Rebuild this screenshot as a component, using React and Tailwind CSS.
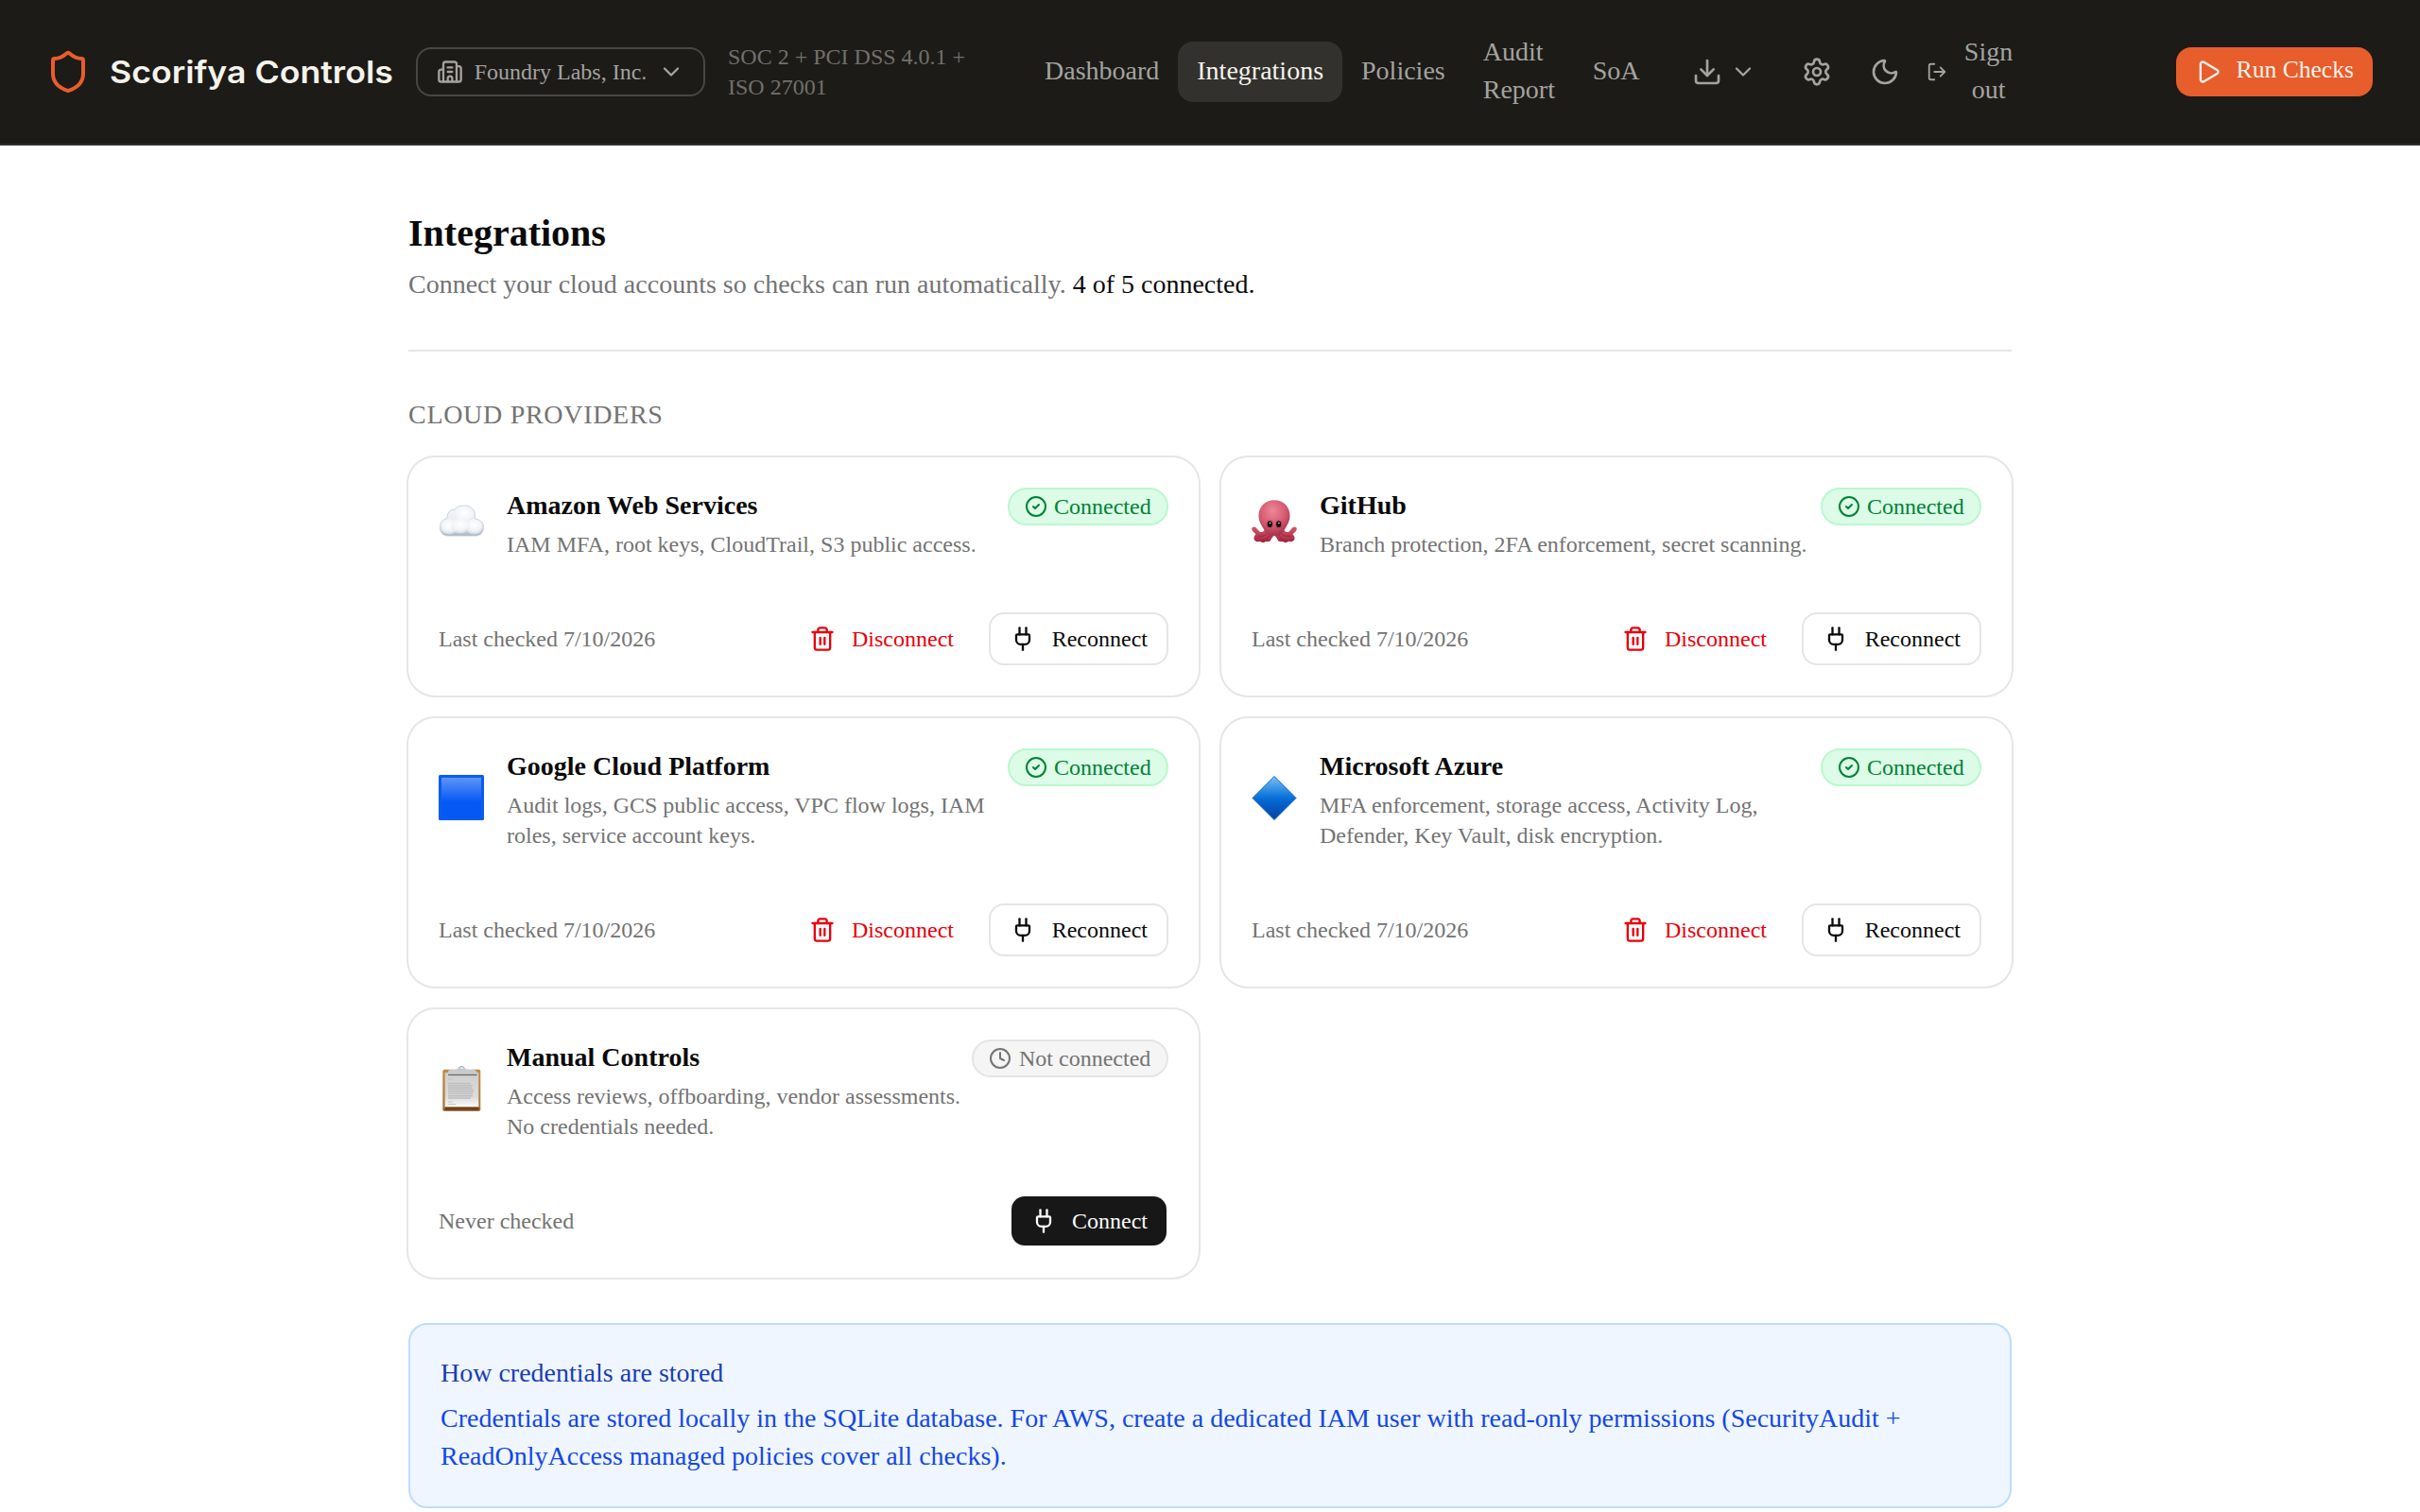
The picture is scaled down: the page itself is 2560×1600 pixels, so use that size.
import React from "react";
import {
  Building2,
  ChevronDown,
  CircleCheck,
  Clock,
  Download,
  LogOut,
  Moon,
  Play,
  Plug,
  Settings,
  Shield,
  Trash2,
} from "lucide-react";

const CloudIcon = () => (
  <svg className="size-12" viewBox="0 0 48 48">
    <defs>
      <linearGradient id="cloud" x1="0" y1="0" x2="0" y2="1">
        <stop offset="0" stopColor="#f4f6f8" />
        <stop offset="0.6" stopColor="#e8ecf1" />
        <stop offset="1" stopColor="#aab7c5" />
      </linearGradient>
      <radialGradient id="puff" cx="0.5" cy="0.4" r="0.6">
        <stop offset="0" stopColor="#ffffff" />
        <stop offset="0.7" stopColor="#f3f5f8" stopOpacity="0.9" />
        <stop offset="1" stopColor="#dde3ea" stopOpacity="0.6" />
      </radialGradient>
    </defs>
    <path
      d="M10 39C4.500 39 1.500 35 1.500 30c0-5 3-8.500 7.500-9.500 0-6 3-9.500 7.500-9 2-3 6-4.500 10.500-4.500 6.500 0 11 4 11.500 9.500 0 1.500 0 3-.5 4.500C44 21.500 47.500 25 47.500 30c0 5-3 9-8.500 9z"
      fill="url(#cloud)"
      stroke="#bcc7d3"
      strokeWidth="0.8"
    />
    <ellipse cx="27" cy="16.500" rx="10.500" ry="9" fill="url(#puff)" />
    <ellipse cx="11" cy="29.500" rx="9" ry="8" fill="url(#puff)" />
    <ellipse cx="37.500" cy="29.500" rx="9" ry="8" fill="url(#puff)" />
    <ellipse cx="23" cy="28.500" rx="9.500" ry="8" fill="url(#puff)" />
  </svg>
);

const OctopusIcon = () => (
  <svg className="size-12" viewBox="0 0 48 48">
    <defs>
      <radialGradient id="octoHead" cx="0.45" cy="0.3" r="0.75">
        <stop offset="0" stopColor="#ee8799" />
        <stop offset="0.55" stopColor="#d55a70" />
        <stop offset="1" stopColor="#9c2c44" />
      </radialGradient>
      <linearGradient id="octoArm" x1="0" y1="0" x2="0" y2="1">
        <stop offset="0" stopColor="#d6576c" />
        <stop offset="1" stopColor="#a3263d" />
      </linearGradient>
    </defs>
    <g fill="url(#octoArm)">
      <path d="M15 31c-1 3-4 5-6.500 3.500C6.500 33 5.500 30 3 29.500c-2-.3-3.500 1.500-2.500 3.500 1 2 2.500 2.500 4 4.500-2 1.500-2.500 4-1.500 6 1.500 2.500 5 1.500 6 1.500 2 1.500 4.500 1.500 6 0 3 1 5.500-.5 6-3L24 38z" />
      <path d="M33 31c1 3 4 5 6.500 3.500 2-1.500 3-4.500 5.500-5 2-.3 3.500 1.500 2.500 3.500-1 2-2.500 2.500-4 4.500 2 1.500 2.500 4 1.500 6-1.500 2.500-5 1.500-6 1.500-2 1.500-4.500 1.500-6 0-3 1-5.500-.5-6-3L24 38z" />
    </g>
    <path
      d="M7 39c4 1 8 0 10-3M10 44c4 0 7-2 9-6M41 39c-4 1-8 0-10-3M38 44c-4 0-7-2-9-6"
      fill="none"
      stroke="#8a1c33"
      strokeWidth="0.6"
    />
    <path
      d="M24 1.300C14 1.300 7.500 8.500 7.500 17.800c0 5.700 2.500 9.200 4.500 12.700 2 3.500 3.500 8.500 12 8.500s10-5 12-8.500c2-3.500 4.500-7 4.500-12.700 0-9.300-6.500-16.500-16.500-16.500z"
      fill="url(#octoHead)"
    />
    <ellipse cx="19.300" cy="26.700" rx="3.600" ry="4.300" fill="#b8415a" />
    <ellipse cx="28.700" cy="26.700" rx="3.600" ry="4.300" fill="#b8415a" />
    <ellipse cx="19.300" cy="26.700" rx="2.500" ry="3.300" fill="#12090b" />
    <ellipse cx="28.700" cy="26.700" rx="2.500" ry="3.300" fill="#12090b" />
    <circle cx="19.500" cy="25.500" r="0.8" fill="#fff" />
    <circle cx="28.900" cy="25.500" r="0.8" fill="#fff" />
  </svg>
);

const SquareIcon = () => (
  <svg className="size-12" viewBox="0 0 48 48">
    <defs>
      <linearGradient id="square" x1="0" y1="0" x2="0" y2="1">
        <stop offset="0" stopColor="#5c94f8" />
        <stop offset="0.6" stopColor="#0558f4" />
        <stop offset="1" stopColor="#0558f4" />
      </linearGradient>
    </defs>
    <rect width="48" height="48" rx="1.500" fill="#0a5cf0" />
    <rect x="3" y="3" width="42" height="43" fill="url(#square)" />
  </svg>
);

const DiamondIcon = () => (
  <svg className="size-12" viewBox="0 0 48 48">
    <defs>
      <linearGradient id="diamond" x1="0" y1="0" x2="0" y2="1">
        <stop offset="0" stopColor="#7cc0f4" />
        <stop offset="0.45" stopColor="#0f78dc" />
        <stop offset="0.55" stopColor="#0568d4" />
        <stop offset="1" stopColor="#0540a0" />
      </linearGradient>
    </defs>
    <path d="M24 1.500 47 24.500 24 47.500 1 24.500z" fill="url(#diamond)" stroke="#0a62b8" strokeWidth="1" strokeLinejoin="round" />
  </svg>
);

const ClipboardIcon = () => (
  <svg className="size-12" viewBox="0 0 48 48">
    <defs>
      <linearGradient id="board" x1="0" y1="0" x2="0" y2="1">
        <stop offset="0" stopColor="#c48c45" />
        <stop offset="0.9" stopColor="#b07a3a" />
        <stop offset="1" stopColor="#8a5a26" />
      </linearGradient>
      <linearGradient id="paper" x1="0" y1="0" x2="0" y2="1">
        <stop offset="0" stopColor="#cfcfcf" />
        <stop offset="0.7" stopColor="#dcdcdc" />
        <stop offset="1" stopColor="#fafafa" />
      </linearGradient>
    </defs>
    <rect x="4.300" y="3.700" width="40" height="44" rx="1.800" fill="url(#board)" />
    <rect x="6.700" y="7" width="35.600" height="36.500" fill="url(#paper)" />
    <path d="M10 14h5M10 38h5M10 40.500h8" stroke="#bdbdbd" strokeWidth="0.8" />
    <path
      d="M10 18.500h24M10 20.700h26M10 22.900h25M10 25.100h27M10 27.300h27M10 29.500h26M10 31.700h26M10 33.900h24"
      stroke="#bebebe"
      strokeWidth="1.500"
    />
    <rect x="6.700" y="43.500" width="35.600" height="3.300" fill="#704317" />
    <rect x="10" y="8.500" width="30.500" height="1.600" fill="#6d665c" />
    <path d="M10 8.700V6q0-1.700 2.500-1.900h5q2-.1 3-1.600h7.600q1 1.500 3 1.600h5q2.500.2 4.500 1.900v2.700z" fill="#c5cbcf" />
    <path d="M21.300 3.500a3 3 0 0 1 6 0" fill="none" stroke="#a9b8c4" strokeWidth="1.300" />
  </svg>
);

const providers = [
  {
    name: "Amazon Web Services",
    icon: CloudIcon,
    description: "IAM MFA, root keys, CloudTrail, S3 public access.",
    connected: true,
    lastChecked: "Last checked 7/10/2026",
  },
  {
    name: "GitHub",
    icon: OctopusIcon,
    description: "Branch protection, 2FA enforcement, secret scanning.",
    connected: true,
    lastChecked: "Last checked 7/10/2026",
  },
  {
    name: "Google Cloud Platform",
    icon: SquareIcon,
    description: "Audit logs, GCS public access, VPC flow logs, IAM roles, service account keys.",
    connected: true,
    lastChecked: "Last checked 7/10/2026",
  },
  {
    name: "Microsoft Azure",
    icon: DiamondIcon,
    description: "MFA enforcement, storage access, Activity Log, Defender, Key Vault, disk encryption.",
    connected: true,
    lastChecked: "Last checked 7/10/2026",
  },
  {
    name: "Manual Controls",
    icon: ClipboardIcon,
    description: "Access reviews, offboarding, vendor assessments. No credentials needed.",
    connected: false,
    lastChecked: "Never checked",
  },
];

const navItems = ["Dashboard", "Integrations", "Policies", "Audit Report", "SoA"];

const Header = () => (
  <header className="flex h-[154px] items-center border-b-2 border-[#32312d] bg-[#1c1b17] px-12 text-[28px] leading-10 text-[#a4a3a0]">
    <Shield className="size-12 shrink-0 text-[#e85d2c]" />
    <div className="ml-5 w-[300px] shrink-0 origin-left scale-x-[1.114] whitespace-nowrap pt-px font-['Inter'] text-[32px] font-semibold text-[#f5f3ec]">
      Scorifya Controls
    </div>
    <button className="ml-6 flex h-[52px] w-[306px] shrink-0 items-center justify-between rounded-2xl border-2 border-[#484744] px-5 text-2xl">
      <Building2 className="size-7 shrink-0" />
      <span className="whitespace-nowrap">Foundry Labs, Inc.</span>
      <ChevronDown className="size-7 shrink-0" />
    </button>
    <div className="ml-6 mr-[45px] w-[270px] shrink-0 text-2xl text-[#71706d]">
      SOC 2 + PCI DSS 4.0.1 + ISO 27001
    </div>
    <nav className="flex shrink-0 items-center">
      {navItems.map((item) => (
        <a
          key={item}
          className={
            item === "Integrations"
              ? "rounded-2xl bg-[#32312d] px-5 pb-[13px] pt-[11px] text-[#f5f3ec]"
              : item === "Audit Report"
                ? "w-[116px] px-5 pb-[13px] pt-[11px]"
                : "px-5 pb-[13px] pt-[11px]"
          }
        >
          {item}
        </a>
      ))}
    </nav>
    <button className="ml-[35px] flex shrink-0 items-center gap-2">
      <Download className="size-8" />
      <ChevronDown className="size-7" />
    </button>
    <Settings className="ml-12 size-8 shrink-0" />
    <Moon className="ml-10 size-8 shrink-0" />
    <button className="ml-7 flex shrink-0 items-center gap-[18px]">
      <LogOut className="size-[22px]" />
      <span className="-mt-0.5 w-[52px] text-center">Sign out</span>
    </button>
    <button className="ml-auto mr-0.5 flex h-[52px] shrink-0 items-center gap-4 rounded-2xl bg-[#e85d2c] px-5 text-[25.6px] text-[#f5f3ec]">
      <Play className="size-7" />
      <span className="-mt-1">Run Checks</span>
    </button>
  </header>
);

const StatusBadge = ({ connected }) =>
  connected ? (
    <span className="flex h-10 w-[170px] shrink-0 items-center gap-[7px] rounded-full border-2 border-[#b9f8cf] bg-[#dcfce7] px-4 text-[#008236]">
      <CircleCheck className="size-6 shrink-0" />
      Connected
    </span>
  ) : (
    <span className="flex h-10 w-[208px] shrink-0 items-center gap-2 whitespace-nowrap rounded-full border-2 border-[#e5e5e5] bg-[#f5f5f5] px-4 text-[#737373]">
      <Clock className="size-6 shrink-0" />
      Not connected
    </span>
  );

const ProviderCard = ({ provider }) => {
  const Icon = provider.icon;
  return (
    <div className="rounded-[28px] bg-white p-8 text-2xl ring-2 ring-[#e6e6e6]">
      <div className="flex items-start justify-between gap-2">
        <div className="flex items-center gap-6">
          <div className="-mt-1 shrink-0">
            <Icon />
          </div>
          <div>
            <h3 className="-mt-px text-[28px] font-bold leading-10">{provider.name}</h3>
            <p className="mt-[5px] text-[#737373]">{provider.description}</p>
          </div>
        </div>
        <StatusBadge connected={provider.connected} />
      </div>
      <div className="mt-14 flex items-center justify-between">
        <span className="text-[#737373]">{provider.lastChecked}</span>
        {provider.connected ? (
          <div className="flex gap-[15px]">
            <button className="flex h-14 items-center gap-[17px] px-[22px] text-[#e7000b]">
              <Trash2 className="size-7" />
              Disconnect
            </button>
            <button className="flex h-14 w-[190px] items-center justify-between rounded-2xl border-2 border-[#e5e5e5] px-5">
              <Plug className="size-7" />
              Reconnect
            </button>
          </div>
        ) : (
          <button className="flex h-14 items-center gap-4 rounded-2xl border-2 border-transparent bg-[#171717] bg-clip-padding px-5 text-[#fafafa]">
            <Plug className="size-7" />
            Connect
          </button>
        )}
      </div>
    </div>
  );
};

const App = () => {
  return (
    <div className="h-[1600px] overflow-hidden bg-white font-['Liberation_Serif',serif] text-[#0a0a0a]">
      <Header />
      <main className="mx-auto max-w-[1792px] px-12 py-16 text-[28px] leading-10">
        <h1 className="pt-px text-[40px] font-bold leading-14">Integrations</h1>
        <p className="mt-1.5 text-[#737373]">
          Connect your cloud accounts so checks can run automatically.{" "}
          <span className="text-[#0a0a0a]">4 of 5 connected.</span>
        </p>
        <hr className="mb-[47px] mt-[49px] border-t-2 border-[#e5e5e5]" />
        <h2 className="tracking-wide text-[#737373]">CLOUD PROVIDERS</h2>
        <div className="mt-[25px] grid grid-cols-2 gap-6">
          {providers.map((provider) => (
            <ProviderCard key={provider.name} provider={provider} />
          ))}
        </div>
        <div className="mt-12 rounded-[20px] border-2 border-[#bedbff] bg-[#eff6ff] px-8 pb-[33px] pt-[31px] text-[#1447e6]">
          <p className="text-[#193cb8]">How credentials are stored</p>
          <p className="mt-2">
            Credentials are stored locally in the SQLite database. For AWS, create a dedicated IAM user with read-only
            permissions (SecurityAudit + ReadOnlyAccess managed policies cover all checks).
          </p>
        </div>
      </main>
    </div>
  );
};

export default App;
